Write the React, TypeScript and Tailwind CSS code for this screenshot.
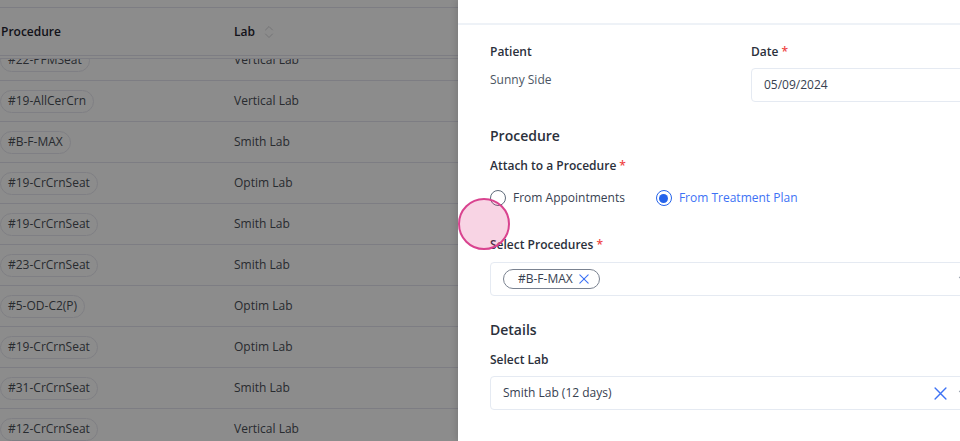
import React from 'react'
import { ChevronDown } from 'lucide-react'

const rows = [
  { code: '#22-PFMSeat', lab: 'Vertical Lab' },
  { code: '#19-AllCerCrn', lab: 'Vertical Lab' },
  { code: '#B-F-MAX', lab: 'Smith Lab' },
  { code: '#19-CrCrnSeat', lab: 'Optim Lab' },
  { code: '#19-CrCrnSeat', lab: 'Smith Lab' },
  { code: '#23-CrCrnSeat', lab: 'Smith Lab' },
  { code: '#5-OD-C2(P)', lab: 'Optim Lab' },
  { code: '#19-CrCrnSeat', lab: 'Optim Lab' },
  { code: '#31-CrCrnSeat', lab: 'Smith Lab' },
  { code: '#12-CrCrnSeat', lab: 'Vertical Lab' },
]

function SortIcon() {
  return (
    <svg width="10" height="14" viewBox="0 0 10 14" fill="none" className="text-[#d4d4d8]">
      <path d="M1.5 5L5 1.5L8.5 5" stroke="currentColor" strokeWidth="1" strokeLinecap="round" strokeLinejoin="round" />
      <path d="M1.5 9L5 12.5L8.5 9" stroke="currentColor" strokeWidth="1" strokeLinecap="round" strokeLinejoin="round" />
    </svg>
  )
}

function ClearIcon({ size, className }: { size: number; className?: string }) {
  return (
    <svg width={size} height={size} viewBox="0 0 12 12" fill="none" className={className}>
      <path d="M1 1L11 11M11 1L1 11" stroke="currentColor" strokeWidth="1.3" strokeLinecap="round" />
    </svg>
  )
}

function LabTable() {
  return (
    <div className="w-[470px] h-full bg-white overflow-hidden pt-[7px]">
      <div className="relative z-10 bg-white border-t border-[#e4e4ee]">
        <div className="h-[48px] flex items-center border-b border-[#e4e4ee] text-[12px] font-semibold text-[#1f2430]">
          <div className="w-[234px] pl-[1px]">Procedure</div>
          <div className="flex items-center gap-[9px]">
            <span>Lab</span>
            <SortIcon />
          </div>
        </div>
        <div className="h-[3px] border-b border-[#e4e4ee]" />
      </div>
      <div className="-mt-[19px]">
        {rows.map((r, i) => (
          <div key={i} className="h-[41px] flex items-center border-b border-[#e4e4ee] text-[12px] text-[#4a4f57]">
            <div className="w-[234px]">
              <span className="inline-flex items-center h-[23px] px-[7px] rounded-full border border-[#e8e8f0]">
                {r.code}
              </span>
            </div>
            <div>{r.lab}</div>
          </div>
        ))}
      </div>
    </div>
  )
}

function Label({ children, required }: { children: React.ReactNode; required?: boolean }) {
  return (
    <div className="text-[12px] leading-[18px] font-semibold text-[#2b303b]">
      {children}
      {required && <span className="text-[#ef4444] ml-[3px]">*</span>}
    </div>
  )
}

function Radio({ checked, label }: { checked?: boolean; label: string }) {
  return (
    <label className="flex items-center gap-[7px]">
      {checked ? (
        <span className="w-[16px] h-[16px] rounded-full border-[1.5px] border-[#2563eb] flex items-center justify-center">
          <span className="w-[9px] h-[9px] rounded-full bg-[#2563eb]" />
        </span>
      ) : (
        <span className="w-[16px] h-[16px] rounded-full border-[1.5px] border-[#5f6b7a]" />
      )}
      <span className={checked ? 'text-[#3d72f5]' : 'text-[#374151]'}>{label}</span>
    </label>
  )
}

function Drawer() {
  return (
    <div className="absolute z-30 top-0 left-[458px] h-full w-[570px] bg-white shadow-[-2px_0_6px_rgba(0,0,0,0.12)]">
      <div className="h-[25px] border-b-2 border-[#eef2f7]" />
      <div className="px-8 pt-[18px] text-[12px]">
        <div className="grid grid-cols-2 gap-4">
          <div>
            <Label>Patient</Label>
            <div className="mt-[11px] leading-4 text-[#4b5563]">Sunny Side</div>
          </div>
          <div>
            <Label required>Date</Label>
            <div className="mt-[7px] h-[34px] rounded border border-[#e5eaf2] flex items-center px-3 text-[#374151]">
              05/09/2024
            </div>
          </div>
        </div>

        <div className="mt-[23px] text-[14px] leading-[22px] font-semibold text-[#2b303b]">Procedure</div>
        <div className="mt-[10px]">
          <Label required>Attach to a Procedure</Label>
        </div>
        <div className="mt-[15px] h-4 flex items-center gap-[31px]">
          <Radio label="From Appointments" />
          <Radio checked label="From Treatment Plan" />
        </div>

        <div className="mt-[30px]">
          <Label required>Select Procedures</Label>
        </div>
        <div className="mt-[8px] h-[34px] rounded border border-[#e5eaf2] flex items-center pl-3 pr-[25px]">
          <span className="inline-flex items-center h-[20px] pl-[14px] pr-[10px] gap-[6px] rounded-full border-[1.5px] border-[#7a8290] text-[#374151]">
            #B-F-MAX
            <ClearIcon size={10} className="text-[#3d72f5]" />
          </span>
          <ChevronDown size={14} className="ml-auto text-[#9ca3af]" />
        </div>

        <div className="mt-[23px] text-[14px] leading-[22px] font-semibold text-[#2b303b]">Details</div>
        <div className="mt-[10px]">
          <Label>Select Lab</Label>
        </div>
        <div className="mt-[7px] h-[34px] rounded border border-[#e5eaf2] flex items-center pl-3 pr-[25px] text-[#374151]">
          <span>Smith Lab (12 days)</span>
          <ClearIcon size={13} className="ml-auto text-[#3d72f5]" />
          <ChevronDown size={14} className="ml-[9px] text-[#9ca3af]" />
        </div>
      </div>
    </div>
  )
}

export default function App() {
  return (
    <div className="relative w-[960px] h-[441px] overflow-hidden bg-white" style={{ fontFamily: "'Open Sans', 'Noto Sans', sans-serif" }}>
      <LabTable />
      <div className="absolute z-20 inset-0 bg-black/45" />
      <Drawer />
      {/* touch indicator */}
      <div className="absolute z-40 left-[458px] top-[198px] w-[52px] h-[52px] rounded-full bg-[rgba(219,39,119,0.2)] border-2 border-[#d9438f]" />
    </div>
  )
}
